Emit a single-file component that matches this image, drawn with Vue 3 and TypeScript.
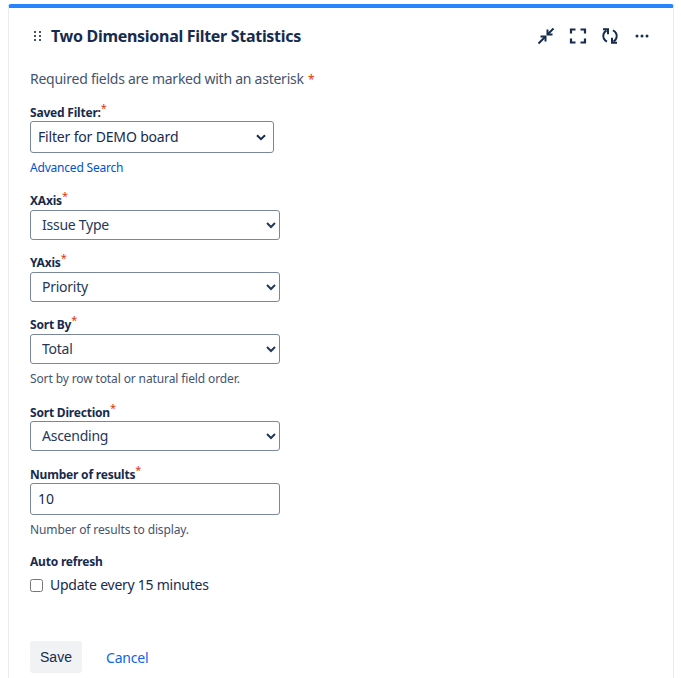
<script setup lang="ts">
const xField = 'Issue Type'
</script>

<template>
  <div class="page">
    <section class="card">
      <header class="head">
        <span class="drag">
          <svg width="8" height="10" viewBox="0 0 8 10" fill="#44546f"><rect x="0" y="0" width="2" height="2"/><rect x="5" y="0" width="2" height="2"/><rect x="0" y="4" width="2" height="2"/><rect x="5" y="4" width="2" height="2"/><rect x="0" y="8" width="2" height="2"/><rect x="5" y="8" width="2" height="2"/></svg>
        </span>
        <h1 class="title">Two Dimensional Filter Statistics</h1>
        <div class="tools">
          <svg width="18" height="18" viewBox="0 0 18 18" fill="none" stroke="#172b4d" stroke-width="2"><path d="M1.500 16.500L8 10"/><path d="M3.500 9.500H8.500V14.500"/><path d="M16.500 1.500L10.500 7.500"/><path d="M10.500 2.500V7.500H15.500"/></svg>
          <svg width="18" height="18" viewBox="0 0 18 18" fill="none" stroke="#172b4d" stroke-width="2.200"><path d="M2 6.500V2.500h4.500M11.500 2.500H16V6.500M16 11.500v4h-4.500M6.500 15.500H2V11.500"/></svg>
          <svg width="18" height="18" viewBox="0 0 18 18" fill="none" stroke="#172b4d" stroke-width="2"><path d="M5.500 3.500C2.500 5 1.500 9 2.800 11.500c.6 1.300 1.700 2.500 3.200 3.200"/><path d="M12.500 14.500C15.500 13 16.500 9 15.200 6.500c-.6-1.300-1.700-2.500-3.200-3.200"/><path d="M2 2.300h5v5"/><path d="M16 15.700h-5v-5"/></svg>
          <svg width="18" height="18" viewBox="0 0 18 18" fill="#172b4d"><circle cx="4" cy="9" r="1.500"/><circle cx="9" cy="9" r="1.500"/><circle cx="14" cy="9" r="1.500"/></svg>
        </div>
      </header>

      <form class="form" @submit.prevent>
        <p class="required">Required fields are marked with an asterisk <span class="star">*</span></p>

        <div class="field saved">
          <label class="label">Saved Filter:<sup class="sup">*</sup></label>
          <select class="saved-select"><option>Filter for DEMO board</option></select>
          <a class="adv" href="#">Advanced Search</a>
        </div>

        <div class="field x">
          <label class="label">XAxis<sup class="sup">*</sup></label>
          <select class="select"><option>{{ xField }}</option></select>
        </div>
        <div class="field y">
          <label class="label">YAxis<sup class="sup">*</sup></label>
          <select class="select"><option>Priority</option></select>
        </div>
        <div class="field sort">
          <label class="label">Sort By<sup class="sup">*</sup></label>
          <select class="select"><option>Total</option></select>
          <p class="hint">Sort by row total or natural field order.</p>
        </div>
        <div class="field dir">
          <label class="label">Sort Direction<sup class="sup">*</sup></label>
          <select class="select dir-select"><option>Ascending</option></select>
        </div>
        <div class="field num">
          <label class="label">Number of results<sup class="sup">*</sup></label>
          <input class="input" value="10" />
          <p class="hint">Number of results to display.</p>
        </div>
        <div class="field auto">
          <label class="label">Auto refresh</label>
          <label class="check"><input type="checkbox" class="box" /><span>Update every 15 minutes</span></label>
        </div>
        <div class="actions">
          <button class="save" type="button">Save</button>
          <a class="cancel" href="#">Cancel</a>
        </div>
      </form>
    </section>
  </div>
</template>

<style>
html, body { margin: 0; background: #fff; overflow: hidden; }
</style>

<style scoped>
.page { padding: 4px 7px 0 8px; height: 674px; overflow: hidden; font-family: "Noto Sans", sans-serif; color: #172b4d; }
.card { box-sizing: border-box; height: 700px; border: 1px solid #ebecf0; border-top: 4px solid #2684ff; border-radius: 3px 3px 0 0; padding: 0 21px; }
.head { display: flex; align-items: center; height: 55px; }
.drag { display: flex; width: 21px; padding-left: 4px; box-sizing: border-box; }
.title { margin: 0; flex: 1; font-size: 16px; font-weight: 700; line-height: 20px; letter-spacing: -0.3px; }
.tools { display: flex; gap: 14px; margin-right: 1px; }
.form { display: block; }
.required { margin: 6px 0 0; font-size: 14px; line-height: 20px; color: #44546f; letter-spacing: -0.25px; }
.star { color: #de350b; font-size: 12px; margin-left: 1px; }
.field { display: flex; flex-direction: column; align-items: flex-start; }
.label { font-size: 12px; font-weight: 700; line-height: 16px; letter-spacing: -0.2px; }
.sup { color: #de350b; font-weight: 400; font-size: 11px; line-height: 0; }
.saved { margin-top: 15px; }
.saved-select { appearance: none; width: 244px; height: 32px; padding: 0 24px 2px 7px; border: 1px solid #7a869a; border-radius: 3px; background: #fff url("data:image/svg+xml,%3Csvg xmlns='http://www.w3.org/2000/svg' width='10' height='7' viewBox='0 0 10 7'%3E%3Cpath d='M1 1.200l4 4 4-4' fill='none' stroke='%23172b4d' stroke-width='2'/%3E%3C/svg%3E") no-repeat right 7px center; font: 14px "Noto Sans", sans-serif; letter-spacing: -0.17px; color: #172b4d; }
.select { width: 250px; height: 30px; padding: 0 7px 2px; margin-top: 1px; border: 1px solid #7a869a; border-radius: 3px; background: #fff; font: 14px "Noto Sans", sans-serif; letter-spacing: -0.25px; color: #253858; }
.dir-select { margin-top: 0; }
.adv { margin-top: 7px; font-size: 12px; line-height: 16px; color: #0052cc; text-decoration: none; letter-spacing: -0.2px; }
.x { margin-top: 17px; }
.y, .sort { margin-top: 15px; }
.dir { margin-top: 18px; }
.num { margin-top: 16px; }
.auto { margin-top: 16px; }
.hint { margin: 7px 0 0; font-size: 12px; line-height: 16px; color: #44546f; letter-spacing: -0.12px; }
.input { box-sizing: border-box; width: 250px; height: 32px; padding: 0 7px 2px; border: 1px solid #7a869a; border-radius: 3px; font: 14px "Noto Sans", sans-serif; color: #172b4d; outline: none; }
.check { display: flex; align-items: center; gap: 7px; margin-top: 5px; font-size: 14px; line-height: 20px; letter-spacing: -0.25px; }
.box { width: 13px; height: 13px; margin: 0; }
.actions { display: flex; align-items: center; gap: 24px; margin-top: 46px; }
.save { width: 52px; height: 32px; border: 0; border-radius: 3px; background: #f1f2f4; font: 14px "Liberation Sans", sans-serif; color: #172b4d; padding: 0; }
.cancel { font-size: 14px; color: #0c66e4; text-decoration: none; letter-spacing: -0.2px; }
</style>
